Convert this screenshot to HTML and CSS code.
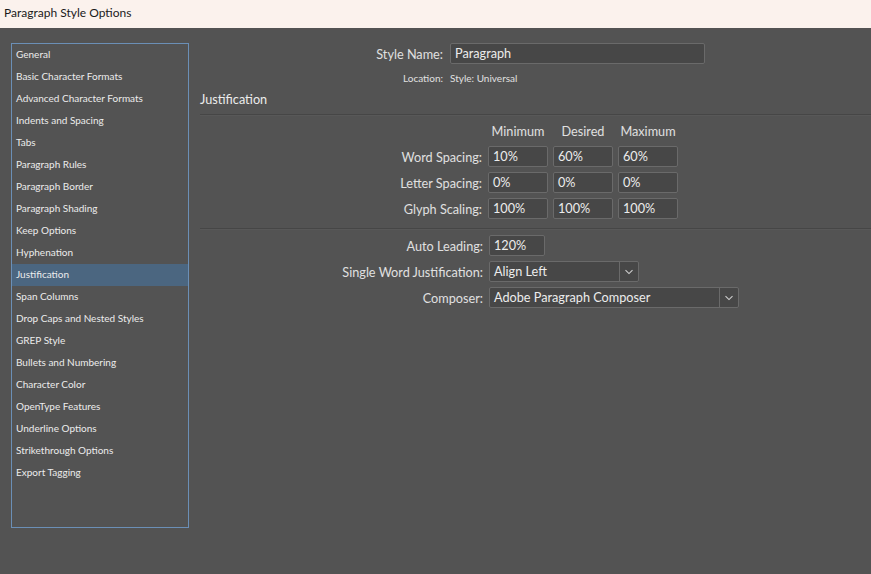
FILE: index.html
```html
<!DOCTYPE html>
<html>
<head>
<meta charset="utf-8">
<link rel="stylesheet" href="styles.css">
</head>
<body>
<div class="titlebar">Paragraph Style Options</div>
<div class="main">
  <ul class="sidebar">
    <li>General</li>
    <li>Basic Character Formats</li>
    <li>Advanced Character Formats</li>
    <li>Indents and Spacing</li>
    <li>Tabs</li>
    <li>Paragraph Rules</li>
    <li>Paragraph Border</li>
    <li>Paragraph Shading</li>
    <li>Keep Options</li>
    <li>Hyphenation</li>
    <li class="selected">Justification</li>
    <li>Span Columns</li>
    <li>Drop Caps and Nested Styles</li>
    <li>GREP Style</li>
    <li>Bullets and Numbering</li>
    <li>Character Color</li>
    <li>OpenType Features</li>
    <li>Underline Options</li>
    <li>Strikethrough Options</li>
    <li>Export Tagging</li>
  </ul>
  <div class="panel">
    <div class="name-row">
      <span class="name-label">Style Name:</span>
      <div class="field name-field">Paragraph</div>
    </div>
    <div class="loc-row">
      <span class="loc-label">Location:</span>
      <span class="loc-value">Style: Universal</span>
    </div>
    <div class="section-title">Justification</div>
    <div class="sep"></div>
    <div class="grid">
      <span></span>
      <span class="colhead">Minimum</span>
      <span class="colhead">Desired</span>
      <span class="colhead">Maximum</span>
      <span class="label">Word Spacing:</span>
      <div class="field">10%</div>
      <div class="field">60%</div>
      <div class="field">60%</div>
      <span class="label">Letter Spacing:</span>
      <div class="field">0%</div>
      <div class="field">0%</div>
      <div class="field">0%</div>
      <span class="label">Glyph Scaling:</span>
      <div class="field">100%</div>
      <div class="field">100%</div>
      <div class="field">100%</div>
    </div>
    <div class="sep sep2"></div>
    <div class="form">
      <div class="row">
        <span class="label">Auto Leading:</span>
        <div class="field lead-field">120%</div>
      </div>
      <div class="row">
        <span class="label">Single Word Justification:</span>
        <div class="select sw-select">
          <span class="select-text">Align Left</span>
          <span class="select-btn"><svg width="10" height="6" viewBox="0 0 10 6"><path d="M1.5 1.2 L5 4.6 L8.5 1.2" fill="none" stroke="#cfcfcf" stroke-width="1.1"/></svg></span>
        </div>
      </div>
      <div class="row">
        <span class="label">Composer:</span>
        <div class="select comp-select">
          <span class="select-text">Adobe Paragraph Composer</span>
          <span class="select-btn"><svg width="10" height="6" viewBox="0 0 10 6"><path d="M1.5 1.2 L5 4.6 L8.5 1.2" fill="none" stroke="#cfcfcf" stroke-width="1.1"/></svg></span>
        </div>
      </div>
    </div>
  </div>
</div>
</body>
</html>
```
FILE: styles.css
```css
html, body {
  margin: 0;
  padding: 0;
}
body {
  width: 871px;
  height: 574px;
  overflow: hidden;
  background: #535353;
  font-family: Lato, "Open Sans", sans-serif;
  color: #e4e4e4;
}
.titlebar {
  height: 28px;
  background: #fbf2ed;
  color: #1a1a1a;
  font-size: 12px;
  line-height: 26px;
  padding-left: 4px;
  box-sizing: border-box;
}
.main {
  display: flex;
  padding: 15px 0 0 11px;
  gap: 11px;
}
.sidebar {
  list-style: none;
  margin: 0;
  padding: 0;
  width: 176px;
  height: 483px;
  border: 1px solid #6b8fb6;
  box-sizing: content-box;
}
.sidebar li {
  height: 22px;
  line-height: 20px;
  font-size: 10px;
  padding-left: 4px;
  color: #ececec;
  white-space: nowrap;
  box-sizing: border-box;
  padding-bottom: 2px;
}
.sidebar li.selected {
  background: #4b6680;
}
.panel {
  flex: 1;
  display: flex;
  flex-direction: column;
}
.field {
  box-sizing: border-box;
  height: 21px;
  background: #474747;
  border: 1px solid #6a6a6a;
  border-radius: 2px;
  font-size: 12.7px;
  line-height: 19px;
  padding-left: 4px;
  color: #ececec;
  white-space: nowrap;
}
.name-row {
  display: flex;
  align-items: center;
  gap: 7px;
}
.name-label {
  width: 243px;
  text-align: right;
  font-size: 12.7px;
  color: #e0e0e0;
}
.name-field {
  width: 255px;
}
.loc-row {
  display: flex;
  gap: 7px;
  margin-top: 7px;
  font-size: 10px;
  line-height: 14px;
  color: #e0e0e0;
}
.loc-label {
  width: 243px;
  text-align: right;
}
.section-title {
  margin-top: 6px;
  font-size: 12.7px;
  line-height: 16px;
  color: #ececec;
}
.sep {
  margin-top: 7px;
  height: 1px;
  background: #464646;
  border-bottom: 1px solid #585858;
}
.grid {
  display: grid;
  grid-template-columns: 283px 60px 60px 60px;
  grid-template-rows: 18px 21px 21px 21px;
  column-gap: 5px;
  row-gap: 5px;
  margin-top: 7px;
}
.grid > * {
  align-self: center;
}
.colhead {
  align-self: start;
  font-size: 12.7px;
  line-height: 16px;
  text-align: center;
  color: #e0e0e0;
}
.label {
  font-size: 12.7px;
  text-align: right;
  color: #e0e0e0;
  white-space: nowrap;
}
.grid .label {
  padding-right: 1px;
}
.sep2 {
  margin-top: 9px;
}
.form {
  display: flex;
  flex-direction: column;
  gap: 5px;
  margin-top: 5px;
}
.row {
  display: flex;
  align-items: center;
  gap: 6px;
}
.row .label {
  width: 283px;
}
.lead-field {
  width: 56px;
}
.select {
  box-sizing: border-box;
  height: 21px;
  display: flex;
  background: #474747;
  border: 1px solid #6a6a6a;
  border-radius: 2px;
  font-size: 12.7px;
  color: #ececec;
}
.select-text {
  flex: 1;
  line-height: 19px;
  padding-left: 4px;
  white-space: nowrap;
}
.select-btn {
  width: 18px;
  border-left: 1px solid #6a6a6a;
  display: flex;
  align-items: center;
  justify-content: center;
}
.sw-select {
  width: 150px;
}
.comp-select {
  width: 250px;
}
```
